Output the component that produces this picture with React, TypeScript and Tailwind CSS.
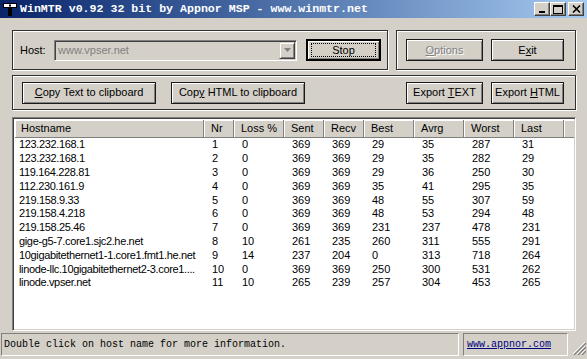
import React from "react";

const rows: string[][] = [
  ["123.232.168.1", "1", "0", "369", "369", "29", "35", "287", "31"],
  ["123.232.168.1", "2", "0", "369", "369", "29", "35", "282", "29"],
  ["119.164.228.81", "3", "0", "369", "369", "29", "36", "250", "30"],
  ["112.230.161.9", "4", "0", "369", "369", "35", "41", "295", "35"],
  ["219.158.9.33", "5", "0", "369", "369", "48", "55", "307", "59"],
  ["219.158.4.218", "6", "0", "369", "369", "48", "53", "294", "48"],
  ["219.158.25.46", "7", "0", "369", "369", "231", "237", "478", "231"],
  ["gige-g5-7.core1.sjc2.he.net", "8", "10", "261", "235", "260", "311", "555", "291"],
  ["10gigabitethernet1-1.core1.fmt1.he.net", "9", "14", "237", "204", "0", "313", "718", "264"],
  ["linode-llc.10gigabitethernet2-3.core1....", "10", "0", "369", "369", "250", "300", "531", "262"],
  ["linode.vpser.net", "11", "10", "265", "239", "257", "304", "453", "265"],
];

const headers = ["Hostname", "Nr", "Loss %", "Sent", "Recv", "Best", "Avrg", "Worst", "Last"];
const cols = "grid-cols-[189px_30px_50px_40px_40px_50px_50px_50px_50px_1fr]";

// classic raised push button
function Btn({ w, children, disabled }: { w: string; children: React.ReactNode; disabled?: boolean }) {
  return (
    <div
      className={`${w} h-[22px] flex items-center justify-center border border-[#1a1a1a] shadow-[inset_1px_1px_0_#fff,inset_-1px_-1px_0_#808080] ${
        disabled ? "text-[#808080] [text-shadow:1px_1px_0_#fff]" : "text-black"
      }`}
    >
      {children}
    </div>
  );
}

function Group({ className, children }: { className: string; children: React.ReactNode }) {
  return (
    <div className={`flex items-center border border-[#303030] shadow-[inset_1px_1px_0_#fff,1px_1px_0_#fff] ${className}`}>
      {children}
    </div>
  );
}

function TitleBtn({ children }: { children: React.ReactNode }) {
  return (
    <div className="w-[16px] h-[14px] bg-[#d4d0c8] flex items-center justify-center border-t border-l border-white border-r border-b border-r-[#404040] border-b-[#404040] shadow-[inset_-1px_-1px_0_#808080]">
      {children}
    </div>
  );
}

export default function App() {
  return (
    <div className="w-[587px] h-[359px] overflow-hidden bg-[#d4d0c8] flex flex-col font-['Liberation_Sans',Arial,sans-serif] text-[11px] text-black">
      {/* title bar */}
      <div className="h-[18px] flex items-center bg-gradient-to-r from-[#0a246a] to-[#a6caf0] pl-[2px] pr-[3px]">
        <svg width="16" height="16" viewBox="0 0 16 16" className="shrink-0">
          <rect x="1.5" y="2.5" width="13" height="4" fill="#fff" stroke="#000" />
          <rect x="6.5" y="6.5" width="3" height="8" fill="#000" stroke="#000" />
          <rect x="7" y="3.5" width="2" height="2" fill="#000" />
        </svg>
        <div className="ml-[2px] font-['Liberation_Mono',monospace] font-bold text-[11.6px] text-white whitespace-pre leading-none">
          WinMTR v0.92 32 bit by Appnor MSP - www.winmtr.net
        </div>
        <div className="ml-auto flex items-center">
          <TitleBtn>
            <svg width="8" height="7" viewBox="0 0 8 7">
              <rect x="1" y="5" width="6" height="2" fill="#000" />
            </svg>
          </TitleBtn>
          <TitleBtn>
            <svg width="10" height="9" viewBox="0 0 10 9">
              <rect x="0.5" y="0.5" width="9" height="8" fill="none" stroke="#000" />
              <rect x="0" y="0" width="10" height="2" fill="#000" />
            </svg>
          </TitleBtn>
          <div className="w-[2px]" />
          <TitleBtn>
            <svg width="9" height="8" viewBox="0 0 9 8">
              <path d="M1 0.5 L8 7.5 M8 0.5 L1 7.5" stroke="#000" strokeWidth="1.6" />
            </svg>
          </TitleBtn>
        </div>
      </div>

      <div className="flex flex-col pl-[12px] pr-[11px] pt-[12px]">
        {/* row 1 */}
        <div className="flex gap-[8px] h-[40px]">
          <Group className="w-[376px] pl-[7px]">
            <span className="w-[34px]">Host:</span>
            <div className="w-[243px] h-[21px] flex items-center border-t border-l border-[#808080] border-r border-b border-r-white border-b-white shadow-[inset_1px_1px_0_#404040] bg-[#d4d0c8]">
              <span className="pl-[3px] text-[#808080] flex-1">www.vpser.net</span>
              <div className="w-[16px] h-[17px] mr-[1px] flex items-center justify-center border-t border-l border-[#d4d0c8] border-r border-b border-r-[#404040] border-b-[#404040] shadow-[inset_1px_1px_0_#fff,inset_-1px_-1px_0_#808080]">
                <svg width="7" height="4" viewBox="0 0 7 4">
                  <path d="M0 0 H7 L3.5 4 Z" fill="#808080" />
                </svg>
              </div>
            </div>
            <div className="ml-[9px] w-[75px] h-[22px] flex items-center justify-center border-2 border-black shadow-[inset_1px_1px_0_#fff,inset_-1px_-1px_0_#808080]">
              <div className="w-[65px] h-[14px] flex items-center justify-center border border-dotted border-black">Stop</div>
            </div>
          </Group>
          <Group className="w-[180px] pl-[9px] gap-[8px]">
            <Btn w="w-[77px]" disabled>
              <span><span className="underline">O</span>ptions</span>
            </Btn>
            <Btn w="w-[73px]">
              <span>E<span className="underline">x</span>it</span>
            </Btn>
          </Group>
        </div>

        {/* row 2 */}
        <Group className="mt-[5px] h-[35px] pl-[9px] pr-[11px]">
          <Btn w="w-[134px]">
            <span><span className="underline">C</span>opy Text to clipboard</span>
          </Btn>
          <div className="w-[15px]" />
          <Btn w="w-[134px]">
            <span>Cop<span className="underline">y</span> HTML to clipboard</span>
          </Btn>
          <div className="flex-1" />
          <Btn w="w-[77px]">
            <span>Export <span className="underline">T</span>EXT</span>
          </Btn>
          <div className="w-[8px]" />
          <Btn w="w-[73px]">
            <span>Export <span className="underline">H</span>TML</span>
          </Btn>
        </Group>

        {/* list view */}
        <div className="mt-[7px] h-[214px] bg-white border-t border-l border-[#808080] border-r border-b border-r-white border-b-white shadow-[inset_1px_1px_0_#404040,inset_-1px_-1px_0_#d4d0c8] p-[1px] pl-[2px] pt-[2px]">
          <div className={`grid ${cols} h-[17px]`}>
            {headers.map((h, i) => (
              <div
                key={h}
                className={`bg-[#d4d0c8] flex items-center border-r border-b border-[#808080] shadow-[inset_1px_1px_0_#fff] ${
                  i === 0 ? "pl-[6px]" : "pl-[7px]"
                }`}
              >
                {h}
              </div>
            ))}
            <div className="bg-[#d4d0c8] border-b border-[#808080] shadow-[inset_1px_1px_0_#fff]" />
          </div>
          <div className="pt-[1px]">
            {rows.map((r, ri) => (
              <div key={ri} className={`grid ${cols} h-[13.8px] items-center leading-none`}>
                {r.map((c, ci) => (
                  <div
                    key={ci}
                    className={`whitespace-nowrap overflow-hidden ${ci === 0 ? "pl-[4px] tracking-[-0.35px]" : "pl-[8px]"}`}
                  >
                    {c}
                  </div>
                ))}
                <div />
              </div>
            ))}
          </div>
        </div>
      </div>

      {/* status bar */}
      <div className="mt-[2px] flex items-center h-[23px] pl-[1px] font-['Liberation_Mono',monospace] text-[10px]">
        <div className="w-[458px] h-full flex items-center pl-[2px] border-t border-l border-[#808080] border-r border-b border-r-white border-b-white">
          Double click on host name for more information.
        </div>
        <div className="ml-[4px] w-[105px] h-full flex items-center pl-[3px] border-t border-l border-[#808080] border-r border-b border-r-white border-b-white">
          <span className="text-[#000080] underline">www.appnor.com</span>
        </div>
        <svg width="15" height="15" viewBox="0 0 15 15" className="ml-[3px] self-end mb-[1px]">
          <path d="M14 2 L2 14 M14 6 L6 14 M14 10 L10 14" stroke="#fff" strokeWidth="1" />
          <path d="M15 3 L3 15 M15 7 L7 15 M15 11 L11 15" stroke="#808080" strokeWidth="1.3" />
        </svg>
      </div>
    </div>
  );
}
